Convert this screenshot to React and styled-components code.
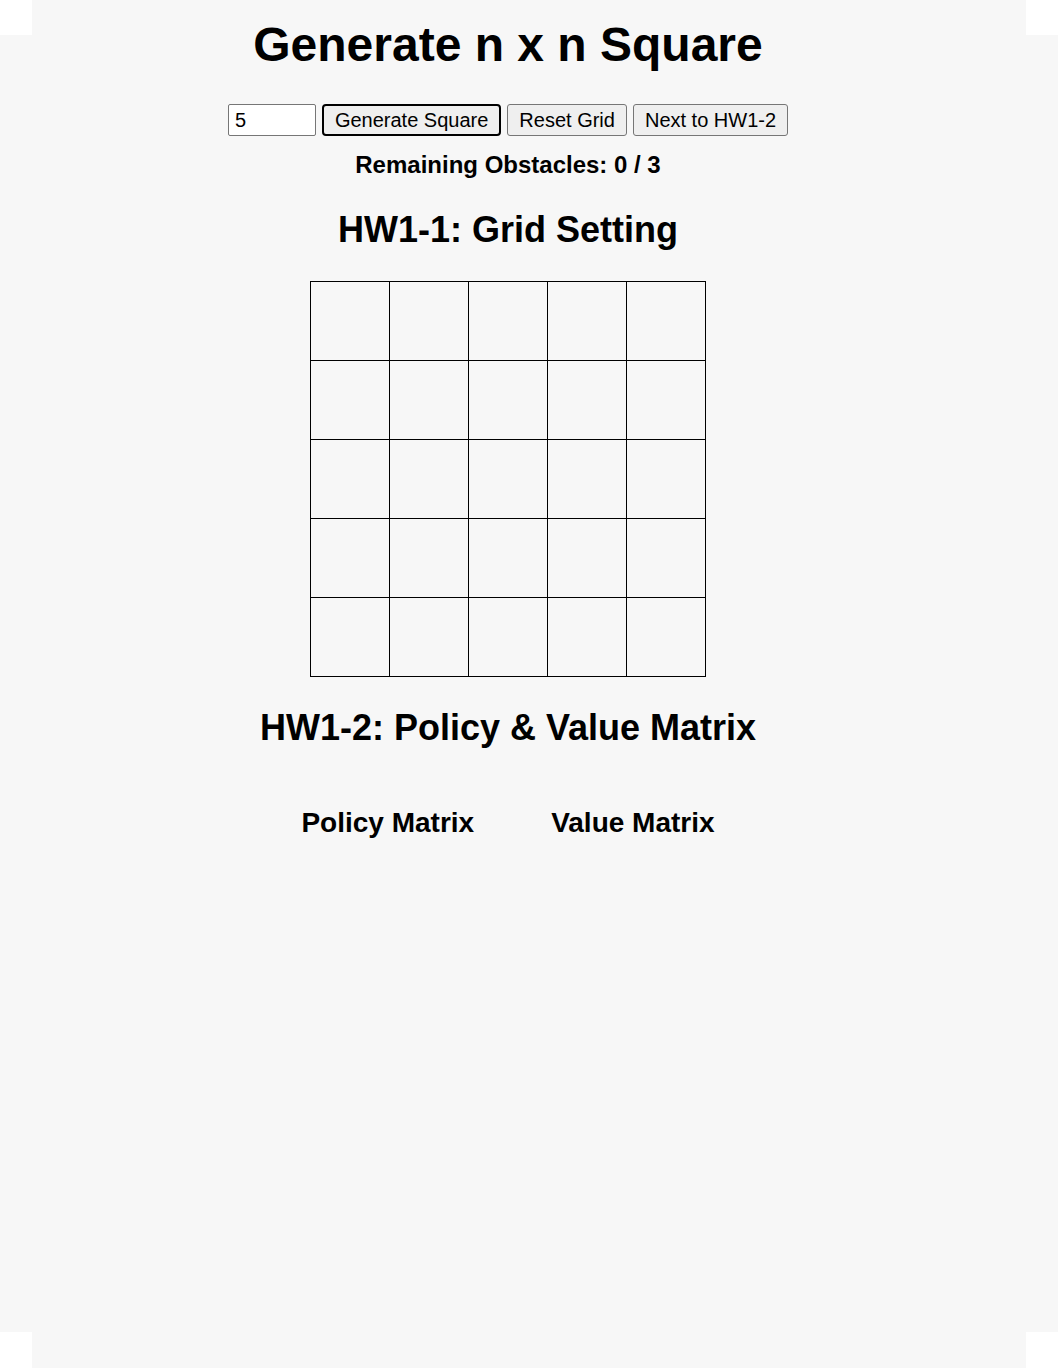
import React, { useState } from "react"
import styled, { createGlobalStyle } from "styled-components"

const Global = createGlobalStyle`
html,body{margin:0;padding:0;background:#fff;}
body{font-family:"Liberation Sans",Arial,sans-serif;color:#000;}
`

const SIZE = 5

export default function App(){
  const [n,setN]=useState("5")
  const cells=Array.from({length:SIZE*SIZE},(_,i)=>i)
  return(
    <Page>
      <Global/>
      <Titulo>Generate n x n Square</Titulo>
      <Controles>
        <Entrada value={n} onChange={e=>setN(e.target.value)}/>
        <Botao foco>Generate Square</Botao>
        <Botao>Reset Grid</Botao>
        <Botao>Next to HW1-2</Botao>
      </Controles>
      <Restantes>Remaining Obstacles: 0 / 3</Restantes>
      <Secao>HW1-1: Grid Setting</Secao>
      <Grade n={SIZE}>
        {cells.map(c=><Celula key={c}/>)}
      </Grade>
      <Secao>HW1-2: Policy &amp; Value Matrix</Secao>
      <Matrizes>
        <Coluna><h3>Policy Matrix</h3></Coluna>
        <Coluna><h3>Value Matrix</h3></Coluna>
      </Matrizes>
    </Page>
  )
}

const Page=styled.div`
box-sizing:border-box;
width:1058px;height:1368px;
padding:17px 74px 0 32px;
display:flex;flex-direction:column;align-items:center;
background:
  linear-gradient(#f7f7f7,#f7f7f7) 32px 0 / 994px 100% no-repeat,
  linear-gradient(#f7f7f7,#f7f7f7) 0 35px / 100% 1297px no-repeat;
`

const Titulo=styled.h1`
margin:0;font-size:48px;line-height:56px;font-weight:700;
`

const Controles=styled.div`
display:flex;gap:6px;align-items:center;
margin-top:31px;
`

const Entrada=styled.input`
box-sizing:border-box;width:88px;height:32px;
border:1px solid #767676;border-radius:2px;
background:#fff;padding:0 6px;
font-family:"Liberation Sans",Arial,sans-serif;font-size:20px;color:#000;
outline:none;
`

const Botao=styled.button`
box-sizing:border-box;height:32px;
padding:0 11px;line-height:${p=>p.foco?'28px':'30px'};
font-family:"Liberation Sans",Arial,sans-serif;font-size:20px;color:#000;
background:#efefef;
border:${p=>p.foco?'2px solid #000':'1px solid #767676'};
border-radius:${p=>p.foco?'4px':'3px'};
white-space:nowrap;cursor:pointer;
`

const Restantes=styled.p`
margin:15px 0 0 0;font-size:24px;line-height:28px;font-weight:700;
`

const Secao=styled.h2`
margin:30px 0 0 0;font-size:36px;line-height:42px;font-weight:700;
`

const Grade=styled.div`
margin-top:30px;
display:grid;
grid-template-columns:repeat(${p=>p.n},79px);
grid-auto-rows:79px;
border-left:1px solid #000;border-top:1px solid #000;
`

const Celula=styled.div`
border-right:1px solid #000;border-bottom:1px solid #000;
`

const Matrizes=styled.div`
display:flex;gap:77px;margin-top:58px;
`

const Coluna=styled.div`
display:flex;flex-direction:column;align-items:center;
h3{margin:0;font-size:28px;line-height:32px;font-weight:700;}
`
